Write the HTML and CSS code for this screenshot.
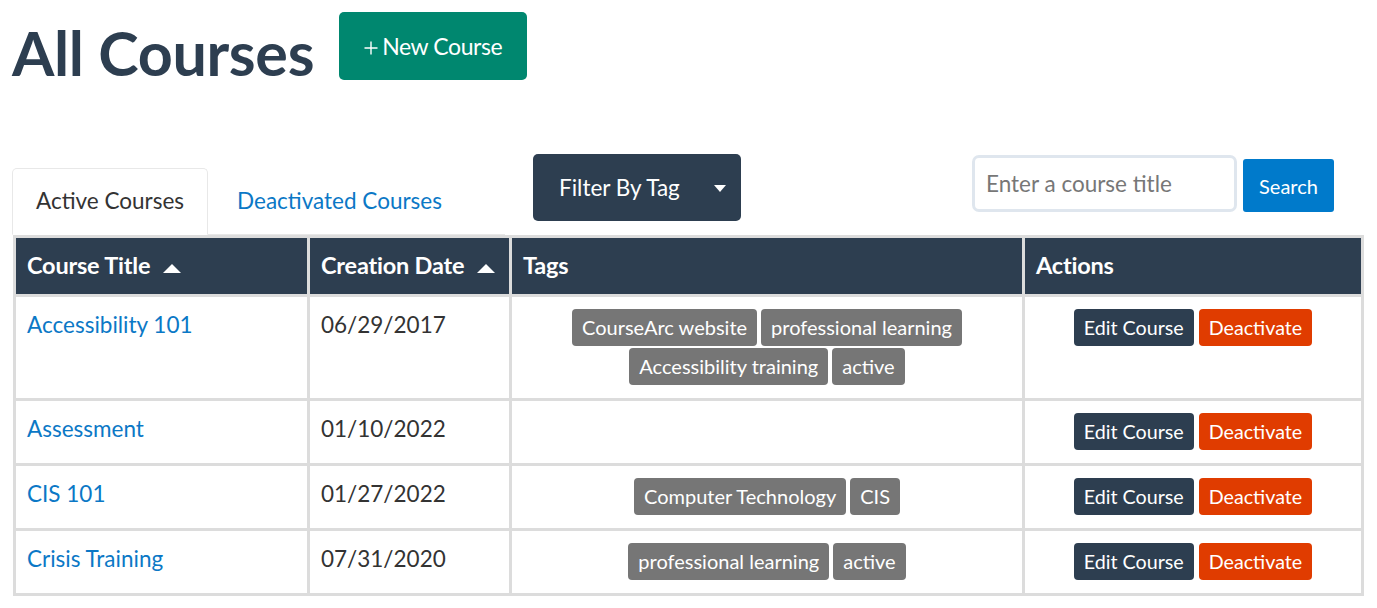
FILE: index.html
```html
<!DOCTYPE html>
<html lang="en">
<head>
<meta charset="utf-8">
<title>All Courses</title>
<link rel="stylesheet" href="styles.css">
</head>
<body>
<div class="page">
  <header class="page-header">
    <h1 class="title">All Courses</h1>
    <button class="btn-new" type="button"><svg class="plus" width="14" height="14" viewBox="0 0 14 14"><path d="M7 0.5V13.5M0.5 7H13.5" stroke="#fff" stroke-width="1.4" fill="none"/></svg>New Course</button>
  </header>

  <div class="toolbar">
    <div class="tabs">
      <span class="tab active">Active Courses</span>
      <a class="tab" href="#">Deactivated Courses</a>
    </div>
    <button class="btn-filter" type="button">Filter By Tag <svg class="caret" width="12" height="7" viewBox="0 0 12 7"><polygon points="0,0 12,0 6,7" fill="#fff"/></svg></button>
    <form class="search">
      <input class="search-input" type="text" placeholder="Enter a course title">
      <button class="btn-search" type="button">Search</button>
    </form>
  </div>

  <table class="courses">
    <colgroup>
      <col class="c1"><col class="c2"><col class="c3"><col class="c4">
    </colgroup>
    <thead>
      <tr>
        <th>Course Title <svg class="sort" width="18" height="9" viewBox="0 0 18 9"><polygon points="9,0 18,9 0,9" fill="#fff"/></svg></th>
        <th>Creation Date <svg class="sort" width="18" height="9" viewBox="0 0 18 9"><polygon points="9,0 18,9 0,9" fill="#fff"/></svg></th>
        <th>Tags</th>
        <th>Actions</th>
      </tr>
    </thead>
    <tbody>
      <tr>
        <td><a href="#">Accessibility 101</a></td>
        <td>06/29/2017</td>
        <td><div class="tags"><span class="tag">CourseArc website</span><span class="tag">professional learning</span><span class="tag">Accessibility training</span><span class="tag">active</span></div></td>
        <td><div class="actions"><button class="btn-edit" type="button">Edit Course</button><button class="btn-deact" type="button">Deactivate</button></div></td>
      </tr>
      <tr>
        <td><a href="#">Assessment</a></td>
        <td>01/10/2022</td>
        <td><div class="tags"></div></td>
        <td><div class="actions"><button class="btn-edit" type="button">Edit Course</button><button class="btn-deact" type="button">Deactivate</button></div></td>
      </tr>
      <tr>
        <td><a href="#">CIS 101</a></td>
        <td>01/27/2022</td>
        <td><div class="tags"><span class="tag">Computer Technology</span><span class="tag">CIS</span></div></td>
        <td><div class="actions"><button class="btn-edit" type="button">Edit Course</button><button class="btn-deact" type="button">Deactivate</button></div></td>
      </tr>
      <tr>
        <td><a href="#">Crisis Training</a></td>
        <td>07/31/2020</td>
        <td><div class="tags"><span class="tag">professional learning</span><span class="tag">active</span></div></td>
        <td><div class="actions"><button class="btn-edit" type="button">Edit Course</button><button class="btn-deact" type="button">Deactivate</button></div></td>
      </tr>
    </tbody>
  </table>
</div>
</body>
</html>
```

FILE: styles.css
```css
* { box-sizing: border-box; }
html, body { margin: 0; padding: 0; background: #fff; }
body {
  font-family: Lato, "Open Sans", "Liberation Sans", sans-serif;
  color: #333;
  font-size: 22px;
  line-height: 1.5;
}
.page { padding: 0 14px 0 12px; }

.page-header {
  display: flex;
  align-items: flex-start;
  padding-top: 12px;
  height: 80px;
}
.title {
  margin: 5px 0 0 0;
  font-size: 61px;
  line-height: 72px;
  font-weight: 700;
  color: #2d3e50;
  letter-spacing: -0.3px;
}
.btn-new {
  margin-left: 25px;
  height: 68px;
  padding: 0 25px 0 25px;
  background: #00876f;
  color: #fff;
  border: 0;
  border-radius: 5px;
  font-family: inherit;
  font-size: 23px;
  display: flex;
  align-items: center;
  gap: 4px;
  letter-spacing: -0.4px;
}
.plus { margin-top: 3px; }

.toolbar {
  display: flex;
  align-items: flex-start;
  margin-top: 74px;
  padding-right: 29px;
}
.tabs {
  width: 493px;
  margin-top: 15px;
  display: flex;
  align-items: flex-end;
  gap: 5px;
  border-bottom: 1px solid #e8e8e8;
  height: 66px;
}
.tab {
  padding: 16px 23px 17px;
  font-size: 22.5px;
  line-height: 32px;
  color: #0b78c6;
  text-decoration: none;
  border: 1px solid transparent;
  border-radius: 5px 5px 0 0;
  margin-bottom: -1px;
}
.tab.active {
  color: #333;
  border-color: #e8e8e8;
  border-bottom-color: #fff;
  background: #fff;
}
.btn-filter {
  margin-left: 28px;
  width: 208px;
  height: 67px;
  background: #2d3e50;
  color: #fff;
  border: 0;
  border-radius: 5px;
  font-family: inherit;
  font-size: 22.5px;
  display: flex;
  align-items: center;
  justify-content: space-between;
  padding: 0 15px 0 26px;
}
.caret { margin-top: 2px; }
.search {
  margin-left: auto;
  margin-top: 1px;
  display: flex;
  align-items: flex-start;
  gap: 6px;
}
.search-input {
  width: 265px;
  height: 57px;
  border: 3px solid #dfe6ee;
  border-radius: 7px;
  padding: 0 11px;
  font-family: inherit;
  font-size: 22.5px;
  color: #333;
  outline: none;
}
.search-input::placeholder { color: #777; }
.btn-search {
  margin-top: 4px;
  width: 91px;
  height: 53px;
  background: #007acb;
  color: #fff;
  border: 0;
  border-radius: 3px;
  font-family: inherit;
  font-size: 20px;
}

.courses {
  margin-top: 0;
  margin-left: 1px;
  width: 1348px;
  table-layout: fixed;
  border-collapse: collapse;
}
.c1 { width: 294px; }
.c2 { width: 202px; }
.c3 { width: 513px; }
.c4 { width: 339px; }
.courses th, .courses td {
  border: 3px solid #dcdcdc;
  padding: 12px 11px 13px 11px;
  vertical-align: top;
  text-align: left;
}
.courses th {
  background: #2d3e50;
  color: #fff;
  font-weight: 700;
  font-size: 23.5px;
  line-height: 31.5px;
  padding: 12px 11px 12px 11px;
  letter-spacing: -0.2px;
}
.sort { margin-left: 7px; vertical-align: 1px; }
.courses td { font-size: 22.5px; line-height: 31.5px; color: #333; }
.courses td a { color: #0b78c6; text-decoration: none; }

.tags {
  display: flex;
  flex-wrap: wrap;
  justify-content: center;
  gap: 2px 4px;
}
.tag {
  display: inline-block;
  height: 37px;
  line-height: 37px;
  padding: 0 10px;
  background: #767676;
  color: #fff;
  font-size: 20px;
  border-radius: 4px;
}
.actions {
  display: flex;
  justify-content: center;
  gap: 5px;
}
.actions button {
  height: 37px;
  padding: 0 10px;
  border: 0;
  border-radius: 4px;
  color: #fff;
  font-family: inherit;
  font-size: 19.7px;
}
.btn-edit { background: #2d3e50; }
.btn-deact { background: #e03c00; }
```
